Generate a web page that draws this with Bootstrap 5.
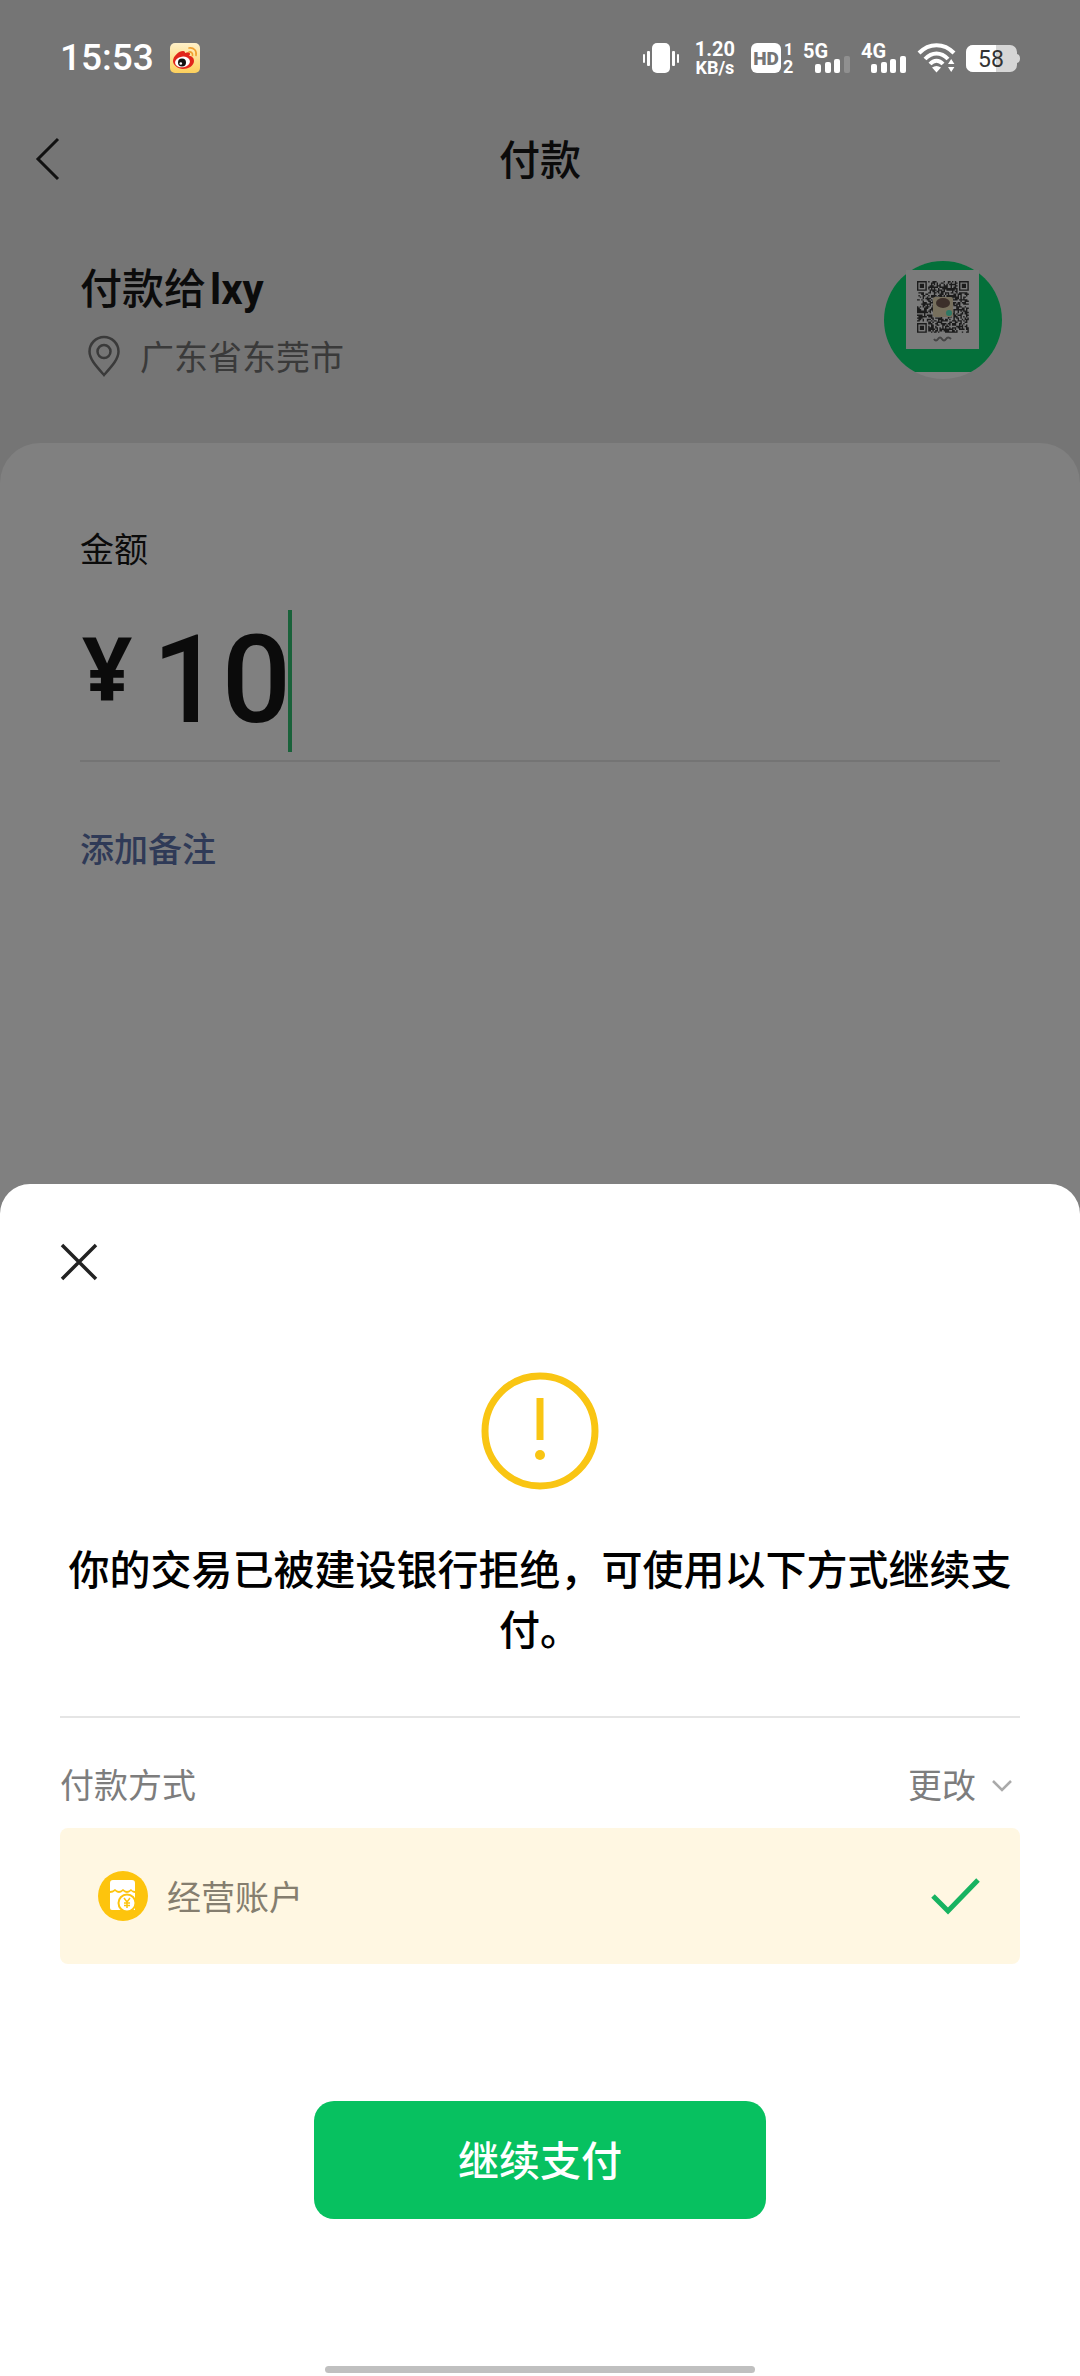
<!DOCTYPE html>
<html lang="zh-CN">
<head>
<meta charset="utf-8">
<meta name="viewport" content="width=device-width, initial-scale=1">
<title>付款</title>
<link href="https://cdn.jsdelivr.net/npm/bootstrap@5.3.0/dist/css/bootstrap.min.css" rel="stylesheet">
<style>
  body { font-family: Roboto, "Noto Sans CJK SC", sans-serif; font-size: 34px; line-height: 48px; color: #0b0b0b; background: #808080; }
  svg { display: block; flex: none; overflow: visible; }
  .backdrop-top { background: linear-gradient(#757575 70%, #7a7a7a); }
  .status-bar { height: 116px; padding: 0 60px; color: #fff; }
  .clock { font-size: 37px; font-weight: 500; }
  .net-speed { font-size: 20px; line-height: 18px; font-weight: 700; }
  .net-speed small { font-size: 18px; }
  .title-bar { height: 88px; padding: 0 32px; }
  .title-bar .side { width: 48px; }
  .title-bar h1 { padding-top: 2px; }
  .heading { font-size: 41px; line-height: 60px; font-weight: 500; }
  .payee { padding: 56px 78px 61px 80px; }
  .payee-title { font-size: 42px; line-height: 60px; font-weight: 500; }
  .payee-name { font-weight: 700; margin-left: 4px; }
  .place { color: #3a3a3a; padding: 14px 0 0 8px; }
  .amount-card { background: #808080; border-radius: 40px 40px 0 0; padding: 83px 80px 0; }
  .amount-line { border-bottom: 2px solid #747474; margin-top: 36px; padding: 0 0 8px 2px; }
  .yen { font: 700 88px/90px "Noto Sans", sans-serif; padding-bottom: 28px; }
  .amount-input { font: 500 122px/142px Roboto, sans-serif; width: 136px; height: 142px; margin-left: 20px; color: #0b0b0b; background: none; outline: 0; }
  .caret { width: 4px; height: 142px; background: #19623a; }
  .note-link { color: #2f3a57; font-weight: 500; margin-top: 64px; }
  .sheet { background: #fff; border-radius: 30px 30px 0 0; padding: 54px 60px 3px; }
  .warn-icon { margin: 86px auto 51px; }
  .notice { color: #000; margin: 0 0 55px; }
  .rule { height: 2px; background: #e5e5e5; }
  .muted { color: #7d7d7d; }
  .change-btn { font-size: 34px; line-height: 48px; }
  .method-row { padding: 44px 8px 18px 0; }
  .account { background: #fff7e2; border-radius: 8px; height: 136px; padding: 0 40px 0 38px; color: #857e6f; }
  .account span { padding: 4px 0 0 3px; }
  .pay-btn { width: 452px; height: 118px; padding: 9px 0 5px; border-radius: 20px; background: #07c160; color: #fff; margin: 137px auto 0; }
  .pay-btn:hover { background: #06ad56; color: #fff; }
  .home-bar { width: 430px; height: 7px; border-radius: 4px; background: #c0c0c0; margin: 147px auto 0; }
</style>
<script src="https://cdn.jsdelivr.net/npm/bootstrap@5.3.0/dist/js/bootstrap.bundle.min.js"></script>
</head>
<body>
<div class="d-flex flex-column min-vh-100">
  <div class="backdrop-top">
    <header class="status-bar d-flex align-items-center justify-content-between">
      <div class="d-flex align-items-center gap-3">
        <span class="clock">15:53</span>
        <svg width="30" height="30" viewBox="0 0 30 30" aria-label="微博">
          <defs><linearGradient id="wb" x1="0" y1="0" x2="0" y2="1"><stop offset="0" stop-color="#fff0c8"/><stop offset="1" stop-color="#fcd05c"/></linearGradient></defs>
          <rect width="30" height="30" rx="5" fill="url(#wb)"/>
          <path d="M3 18C3 13 9 8 13 8c2 0 2 1 2 2 3-1 5-1 5 1 0 1-1 2-1 2 3 0 5 2 5 5 0 5-6 8-11 8S3 22 3 18z" fill="#e1251b"/>
          <ellipse cx="12.500" cy="19" rx="7.500" ry="5.300" fill="#fff" transform="rotate(-8 12 19)"/>
          <circle cx="12" cy="19.500" r="4" fill="#111"/><circle cx="10.800" cy="20.500" r="1.300" fill="#fff"/>
          <path d="M19 9c2-.5 4 1 3.500 3.500M19 5c5-.8 8 3 7 7.500" fill="none" stroke="#f0a030" stroke-width="1.600" stroke-linecap="round"/>
        </svg>
      </div>
      <div class="d-flex align-items-center">
        <svg width="36" height="30" viewBox="0 0 36 30" fill="#fff" aria-label="振动"><rect x="9" width="18" height="30" rx="5"/><rect x="4" y="8" width="3" height="15" rx="1"/><rect x="0" y="11" width="2" height="9" rx="1"/><rect x="29" y="8" width="3" height="15" rx="1"/><rect x="34" y="11" width="2" height="9" rx="1"/></svg>
        <div class="net-speed text-center ms-3">1.20<br><small class="fw-bold">KB/s</small></div>
        <svg class="ms-3" width="44" height="32" viewBox="0 0 44 32" fill="#fff" font-family="Roboto" font-weight="700"><rect y="1" width="30" height="30" rx="6"/><text x="15" y="23" font-size="19" text-anchor="middle" fill="#757575" font-weight="900">HD</text><text x="33" y="13" font-size="16">1</text><text x="32" y="31" font-size="18">2</text></svg>
        <svg class="ms-2" width="50" height="32" viewBox="0 0 50 32" fill="#fff" font-family="Roboto" font-weight="700"><text x="0" y="16" font-size="20">5G</text><rect x="12" y="22" width="6" height="9" rx="2"/><rect x="22" y="20" width="6" height="11" rx="2"/><rect x="31" y="17" width="6" height="14" rx="2"/><rect x="41" y="14" width="6" height="17" rx="2" opacity=".2"/></svg>
        <svg class="ms-2" width="49" height="32" viewBox="0 0 49 32" fill="#fff" font-family="Roboto" font-weight="700"><text x="0" y="16" font-size="20">4G</text><rect x="10" y="22" width="6" height="9" rx="2"/><rect x="20" y="20" width="6" height="11" rx="2"/><rect x="29" y="17" width="6" height="14" rx="2"/><rect x="39" y="14" width="6" height="17" rx="2"/></svg>
        <svg class="ms-2" width="40" height="30" viewBox="0 0 40 30" fill="none" stroke="#fff" stroke-width="4" aria-label="Wi-Fi"><path d="M1 10C11-.5 26-.5 36 10M7 16c7-7.500 16-7.500 23 0M12 21c4-4.500 9-4.500 13 0"/><path d="M14 24.500c3-2 6-2 9 0L18.500 29.500zM30 21l3.200-5 3.200 5zM30 24l3.200 5 3.200-5z" fill="#fff" stroke="none"/></svg>
        <svg class="ms-2" width="54" height="27" viewBox="0 0 54 27" font-family="Roboto" aria-label="电量"><path d="M7 0h37a7 7 0 0 1 7 7v2c4 0 4 9 0 9v2a7 7 0 0 1-7 7H7a7 7 0 0 1-7-7V7a7 7 0 0 1 7-7z" fill="#d6d6d6"/><path d="M7 0h23v27H7a7 7 0 0 1-7-7V7a7 7 0 0 1 7-7z" fill="#fff"/><text x="25" y="22" font-size="23" text-anchor="middle" fill="#333">58</text></svg>
      </div>
    </header>

    <nav class="title-bar d-flex align-items-center justify-content-between" aria-label="标题栏">
      <button class="side btn border-0 p-0" type="button" aria-label="返回">
        <svg width="32" height="44" viewBox="0 0 32 44" fill="none" stroke="#111" stroke-width="3"><path d="M26 1L6 21l20 20"/></svg>
      </button>
      <h1 class="heading m-0">付款</h1>
      <span class="side"></span>
    </nav>

    <section class="payee d-flex align-items-start justify-content-between">
      <div>
        <h2 class="payee-title m-0">付款给<span class="payee-name">lxy</span></h2>
        <div class="place d-flex align-items-center gap-3">
          <svg width="36" height="46" viewBox="0 0 36 46" fill="none" stroke="#3a3a3a" stroke-width="2.500"><path d="M16 40C8 31 1.500 24 1.500 16.500a14.500 14.500 0 0 1 29 0C30.500 24 24 31 16 40z"/><circle cx="16" cy="16.500" r="6.500"/></svg>
          <span>广东省东莞市</span>
        </div>
      </div>
      <svg width="120" height="120" viewBox="0 0 120 120" aria-label="收款码">
        <defs><clipPath id="round"><circle cx="61" cy="60" r="59"/></clipPath></defs>
        <g clip-path="url(#round)"><rect width="120" height="120" fill="#808080"/><rect width="120" height="112" fill="#04703a"/></g>
        <rect x="24" y="10" width="73" height="79" fill="#7b7b7b"/>
        <path id="qr" fill="#1c1c1c" transform="translate(35 21) scale(1.400)"/>
        <rect x="51" y="37" width="20" height="20" rx="2" fill="#77705d"/><ellipse cx="61" cy="43" rx="7" ry="5" fill="#3c2f2a"/><circle cx="67" cy="53" r="3" fill="#2f7864"/>
        <path d="M52 79q2 3 4 0t4 0 4 0 5 0" stroke="#444" stroke-width="2" fill="none"/>
      </svg>
    </section>
    <main class="amount-card">
      <label class="d-block" for="amount">金额</label>
      <div class="amount-line d-flex align-items-center">
        <span class="yen">¥</span>
        <input class="amount-input border-0 p-0" id="amount" type="text" inputmode="decimal" value="10">
        <span class="caret"></span>
      </div>
      <a class="note-link d-inline-block text-decoration-none" href="#note">添加备注</a>
    </main>
  </div>

  <section class="sheet mt-auto" role="dialog" aria-label="支付提示">
    <button class="btn border-0 p-0 d-block" type="button" aria-label="关闭">
      <svg width="48" height="48" viewBox="0 0 48 48" fill="none" stroke="#222" stroke-width="3.500"><path d="M2 7l34 34M36 7L2 41"/></svg>
    </button>
    <svg class="warn-icon" width="118" height="118" viewBox="0 0 118 118" fill="none" stroke="#f9c513" stroke-width="7" aria-hidden="true"><circle cx="59" cy="59" r="55"/><path d="M59 26v42"/><circle cx="59" cy="83" r="5" fill="#f9c513" stroke="none"/></svg>
    <p class="notice heading text-center">你的交易已被建设银行拒绝，可使用以下方式继续支付。</p>
    <div class="rule"></div>
    <div class="method-row muted d-flex align-items-center justify-content-between">
      <span>付款方式</span>
      <button class="change-btn btn border-0 p-0 muted d-flex align-items-center gap-3" type="button">更改
        <svg width="20" height="12" viewBox="0 0 20 12" fill="none" stroke="#aaa" stroke-width="2.500"><path d="M1 1l9 9 9-9"/></svg>
      </button>
    </div>
    <label class="account d-flex align-items-center">
      <svg width="50" height="50" viewBox="0 0 50 50" aria-hidden="true"><circle cx="25" cy="25" r="25" fill="#fdc40d"/><path d="M12 12q0-3 3-3h19q3 0 3 3v8q-3 0-4-2-2 2-4 2t-4-2q-2 2-4 2t-4-2q-2 2-5 2z" fill="#fff"/><path d="M12 22q3 0 5-2 2 2 4 2t4-2q2 2 4 2t4-2q2 2 4 2v17H14q-2 0-2-2z" fill="#fff"/><circle cx="29" cy="32" r="8.500" fill="#fff" stroke="#fdc40d" stroke-width="2"/><path d="M26 27l3 4 3-4M29 31v6M26 32h6M26 34.500h6" stroke="#fdc40d" stroke-width="1.500" fill="none"/></svg>
      <span class="flex-grow-1 ms-3">经营账户</span>
      <input class="visually-hidden" type="radio" name="method" checked>
      <svg width="50" height="38" viewBox="0 0 50 38" fill="none" stroke="#17b361" stroke-width="5"><path d="M3 19l15 15L48 3"/></svg>
    </label>
    <button class="pay-btn heading btn border-0 d-block" type="button">继续支付</button>
    <div class="home-bar"></div>
  </section>
</div>
<script>
  // Payment code: three finder squares plus a repeatable module pattern
  const n = 37, finder = (x, y) => {
    const d = Math.max(Math.abs(x - 3), Math.abs(y - 3));
    return d === 4 ? 0 : d === 3 || d <= 1 ? 1 : 0;
  };
  let seed = 7, path = '';
  for (let y = 0; y < n; y++) for (let x = 0; x < n; x++) {
    seed = (seed * 1103515245 + 12345) % 2147483648;
    let on = (seed >> 16) % 100 < 56;
    if (x < 8 && y < 8) on = finder(x, y);
    else if (x > n - 9 && y < 8) on = finder(n - 1 - x, y);
    else if (x < 8 && y > n - 9) on = finder(x, n - 1 - y);
    if (on) path += `M${x} ${y}h1v1h-1z`;
  }
  document.getElementById('qr').setAttribute('d', path);
</script>
</body>
</html>
